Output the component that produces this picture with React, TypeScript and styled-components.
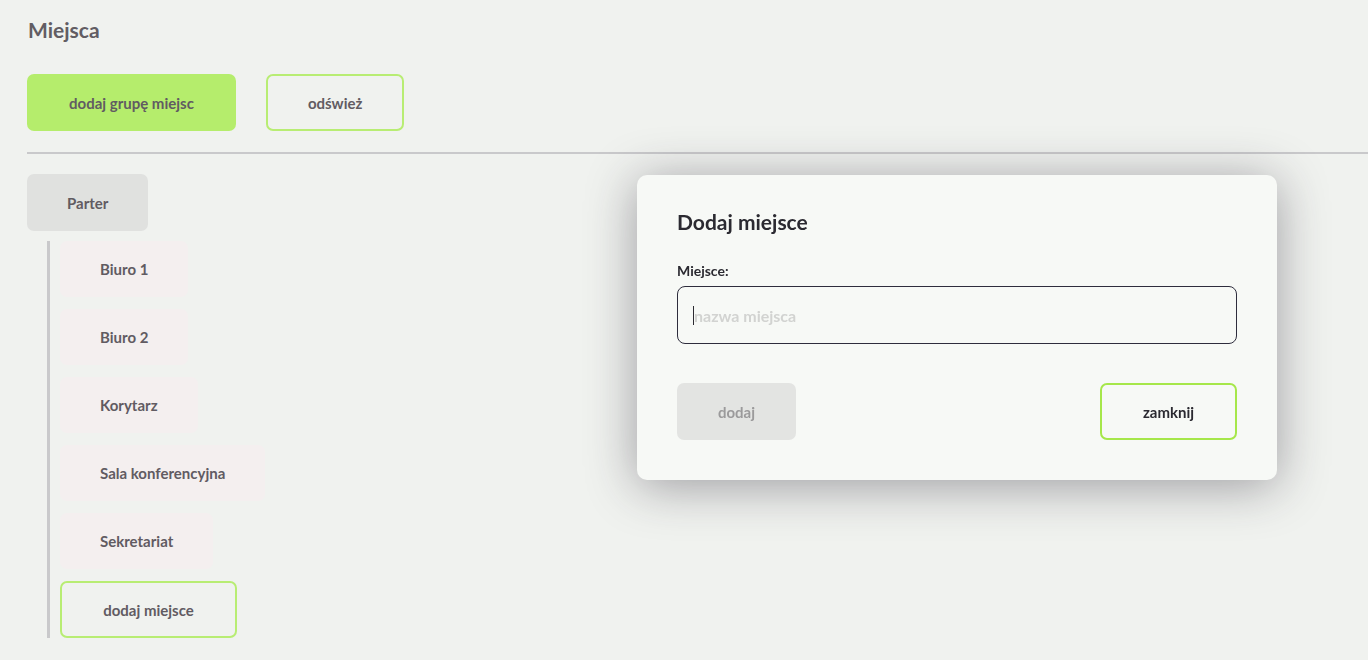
import React from 'react';
import styled, {createGlobalStyle} from "styled-components";

const places = ['Biuro 1', 'Biuro 2', 'Korytarz', 'Sala konferencyjna', 'Sekretariat'];

export default function App() {
    return (
        <>
            <GlobalStyle/>
            <Page>
                <Title>Miejsca</Title>
                <Toolbar>
                    <Button variant="filled">dodaj grupę miejsc</Button>
                    <Button variant="outline">odśwież</Button>
                </Toolbar>
                <Divider/>
                <GroupButton>Parter</GroupButton>
                <PlaceList>
                    {places.map(p => <PlaceItem key={p}>{p}</PlaceItem>)}
                    <Button variant="outline">dodaj miejsce</Button>
                </PlaceList>
            </Page>
            <Modal>
                <ModalTitle>Dodaj miejsce</ModalTitle>
                <Label htmlFor="place">Miejsce:</Label>
                <InputBox>
                    <Caret/>
                    <Input id="place" placeholder="nazwa miejsca"/>
                </InputBox>
                <ModalActions>
                    <Button variant="disabled">dodaj</Button>
                    <Button variant="outline" dark>zamknij</Button>
                </ModalActions>
            </Modal>
        </>
    );
}

const GlobalStyle = createGlobalStyle`
  body {
    margin: 0;
    background: #f0f2ef;
    font-family: Lato, "Noto Sans", sans-serif;
    color: #615b62;
  }
`

const Page = styled.div`
  padding: 17px 0 0 27px;
`

const Title = styled.h1`
  margin: 0 0 31px 1px;
  font-size: 21px;
  font-weight: 700;
  line-height: 26px;
  color: #625d63;
`

const Toolbar = styled.div`
  display: flex;
  gap: 30px;
`

const Button = styled.button<{ variant: 'filled' | 'outline' | 'disabled', dark?: boolean }>`
  height: 57px;
  padding: 0 40px;
  border-radius: 7px;
  font-family: inherit;
  font-size: 15px;
  font-weight: 700;
  cursor: pointer;
  box-sizing: border-box;
  color: ${p => p.dark ? '#2b2a31' : '#615b62'};
  background: ${p => p.variant === 'filled' ? '#b5ed6c' : p.variant === 'disabled' ? '#e3e4e2' : 'transparent'};
  border: 2px solid ${p => p.variant === 'outline' ? (p.dark ? '#a6e74a' : '#b8ed73') : 'transparent'};
  ${p => p.variant === 'disabled' && 'color: #9b9a9b; width: 119px; padding: 0;'}
  ${p => p.dark && 'width: 137px; padding: 0;'}
`

const Divider = styled.hr`
  margin: 21px 0 20px;
  border: none;
  height: 2px;
  background: #c9c9cb;
`

const GroupButton = styled.div`
  display: inline-flex;
  align-items: center;
  height: 57px;
  padding: 0 40px;
  border-radius: 7px;
  background: #e0e1df;
  font-size: 15px;
  font-weight: 700;
`

const PlaceList = styled.div`
  display: flex;
  flex-direction: column;
  align-items: flex-start;
  gap: 12px;
  margin: 10px 0 0 20px;
  padding-left: 10px;
  border-left: 3px solid #c9c9cb;
  width: fit-content;

  button {
    height: 57px;
    width: 177px;
  }
`

const PlaceItem = styled.div`
  display: flex;
  align-items: center;
  height: 56px;
  padding: 0 40px;
  border-radius: 7px;
  background: #f4efef;
  font-size: 15px;
  font-weight: 700;
`

const Modal = styled.div`
  position: fixed;
  left: 637px;
  top: 175px;
  width: 640px;
  box-sizing: border-box;
  padding: 34px 40px 40px;
  background: #f7f9f6;
  border-radius: 10px;
  box-shadow: 0 6px 50px rgba(40, 35, 50, 0.42);
  display: flex;
  flex-direction: column;
`

const ModalTitle = styled.h2`
  margin: 0 0 27px;
  font-size: 21px;
  font-weight: 700;
  line-height: 26px;
  color: #2b2a31;
`

const Label = styled.label`
  font-size: 14px;
  font-weight: 700;
  color: #2b2a31;
  margin-bottom: 7px;
`

const InputBox = styled.div`
  display: flex;
  align-items: center;
  height: 58px;
  box-sizing: border-box;
  border: 1.5px solid #2e2d3d;
  border-radius: 8px;
  padding: 0 15px;
`

const Caret = styled.span`
  width: 1px;
  height: 19px;
  background: #2b2a31;
`

const Input = styled.input`
  flex: 1;
  border: none;
  background: transparent;
  padding: 0;
  font-family: inherit;
  font-size: 16px;
  font-weight: 700;
  outline: none;

  &::placeholder {
    color: #d2d3d1;
  }
`

const ModalActions = styled.div`
  display: flex;
  justify-content: space-between;
  margin-top: 39px;
`
